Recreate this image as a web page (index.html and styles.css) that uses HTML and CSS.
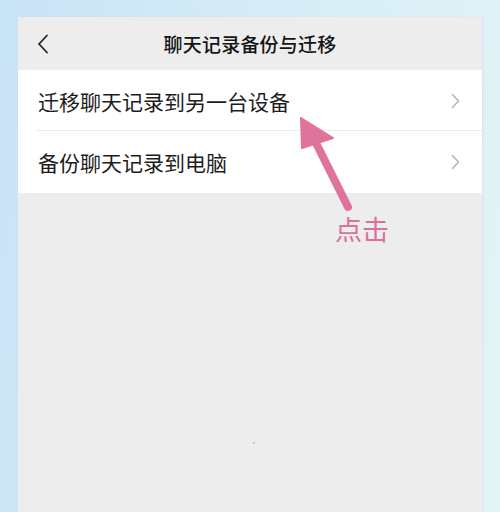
FILE: index.html
```html
<!DOCTYPE html>
<html lang="zh">
<head>
<meta charset="utf-8">
<link rel="stylesheet" href="styles.css">
</head>
<body>
<div class="screen">
  <div class="header">
    <svg class="back" width="12" height="20" viewBox="0 0 12 20"><path d="M10 1.5 L2 10 L10 18.5" fill="none" stroke="#222" stroke-width="1.8" stroke-linecap="round" stroke-linejoin="round"/></svg>
    <div class="title">聊天记录备份与迁移</div>
  </div>
  <div class="list">
    <div class="row first">
      <span class="label">迁移聊天记录到另一台设备</span>
      <svg class="chev" width="9" height="16" viewBox="0 0 9 16"><path d="M1.5 1.5 L7.5 8 L1.5 14.5" fill="none" stroke="#b4b4b4" stroke-width="1.5" stroke-linecap="round" stroke-linejoin="round"/></svg>
    </div>
    <div class="row second">
      <span class="label">备份聊天记录到电脑</span>
      <svg class="chev" width="9" height="16" viewBox="0 0 9 16"><path d="M1.5 1.5 L7.5 8 L1.5 14.5" fill="none" stroke="#b4b4b4" stroke-width="1.5" stroke-linecap="round" stroke-linejoin="round"/></svg>
    </div>
  </div>
  <div class="rest"><span class="dot"></span></div>
  <svg class="arrow" width="120" height="110" viewBox="0 0 120 110">
    <line x1="79" y1="98" x2="46" y2="32" stroke="#e0739b" stroke-width="8" stroke-linecap="round"/>
    <polygon points="32,9 64,29 33,39" fill="#e0739b" stroke="#e0739b" stroke-width="2" stroke-linejoin="round"/>
  </svg>
  <div class="tap">点击</div>
</div>
</body>
</html>
```
FILE: styles.css
```css
html, body {
  margin: 0;
  padding: 0;
}
body {
  width: 500px;
  height: 512px;
  overflow: hidden;
  background: linear-gradient(100deg, #c8e3f6 0%, #d6ecf7 45%, #e3f4f6 100%);
  font-family: "Noto Sans CJK SC", "Noto Sans", sans-serif;
}
.screen {
  position: relative;
  margin: 17px 0 0 18px;
  width: 464px;
  height: 495px;
  background: #ededed;
  display: flex;
  flex-direction: column;
  box-shadow: 1px 0 2px rgba(0,0,0,0.06);
}
.header {
  height: 53px;
  display: flex;
  align-items: center;
  justify-content: center;
  position: relative;
  background: #ededed;
}
.back {
  position: absolute;
  left: 19px;
  top: 17px;
}
.title {
  font-size: 19px;
  font-weight: 500;
  color: #141414;
  letter-spacing: 0.2px;
}
.list {
  background: #fff;
}
.row {
  display: flex;
  align-items: center;
  justify-content: space-between;
  padding: 0 22px 0 20px;
}
.row.first {
  height: 61px;
  position: relative;
}
.row.first::after {
  content: "";
  position: absolute;
  left: 19px;
  right: 0;
  bottom: 0;
  height: 1px;
  background: #ececec;
}
.row.second {
  height: 62px;
}
.label {
  font-size: 21px;
  color: #1c1c1c;
}
.rest {
  flex: 1;
  position: relative;
}
.dot {
  position: absolute;
  left: 235px;
  top: 249px;
  width: 2px;
  height: 2px;
  background: #bbb;
  border-radius: 50%;
}
.arrow {
  position: absolute;
  left: 251px;
  top: 92px;
}
.tap {
  position: absolute;
  left: 317px;
  top: 195px;
  font-size: 27px;
  color: #d9719b;
  line-height: 34px;
}
```
